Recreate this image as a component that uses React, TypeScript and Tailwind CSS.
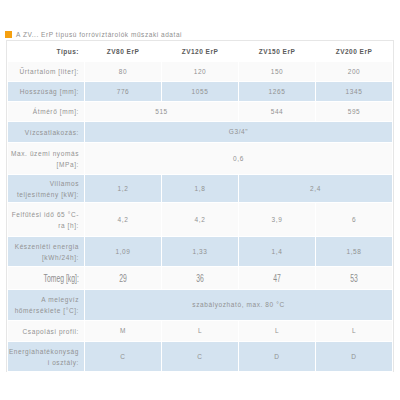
import React from "react";

type Cell = { t: string; span?: number };
type Row = { label: string[]; cells: Cell[]; h: number; blue: boolean; big?: boolean };

const rows: Row[] = [
  { label: ["Űrtartalom [liter]:"], cells: [{ t: "80" }, { t: "120" }, { t: "150" }, { t: "200" }], h: 19, blue: false },
  { label: ["Hosszúság [mm]:"], cells: [{ t: "776" }, { t: "1055" }, { t: "1265" }, { t: "1345" }], h: 19, blue: true },
  { label: ["Átmérő [mm]:"], cells: [{ t: "515", span: 2 }, { t: "544" }, { t: "595" }], h: 19, blue: false },
  { label: ["Vízcsatlakozás:"], cells: [{ t: "G3/4\"", span: 4 }], h: 20, blue: true },
  { label: ["Max. üzemi nyomás", "[MPa]:"], cells: [{ t: "0,6", span: 4 }], h: 31, blue: false },
  { label: ["Villamos", "teljesítmény [kW]:"], cells: [{ t: "1,2" }, { t: "1,8" }, { t: "2,4", span: 2 }], h: 27, blue: true },
  { label: ["Felfűtési idő 65 °C-", "ra [h]:"], cells: [{ t: "4,2" }, { t: "4,2" }, { t: "3,9" }, { t: "6" }], h: 33, blue: false },
  { label: ["Készenléti energia", "[kWh/24h]:"], cells: [{ t: "1,09" }, { t: "1,33" }, { t: "1,4" }, { t: "1,58" }], h: 29, blue: true },
  { label: ["Tomeg [kg]:"], cells: [{ t: "29" }, { t: "36" }, { t: "47" }, { t: "53" }], h: 22, blue: false, big: true },
  { label: ["A melegvíz", "hőmérséklete [°C]:"], cells: [{ t: "szabályozható, max. 80 °C", span: 4 }], h: 30, blue: true },
  { label: ["Csapolási profil:"], cells: [{ t: "M" }, { t: "L" }, { t: "L" }, { t: "L" }], h: 20, blue: false },
  { label: ["Energiahatékonyság", "i osztály:"], cells: [{ t: "C" }, { t: "C" }, { t: "D" }, { t: "D" }], h: 29, blue: true },
];

export default function App() {
  return (
    <div
      className="w-[400px] h-[400px] bg-white overflow-hidden"
      style={{ fontFamily: '"Liberation Sans", Arial, sans-serif' }}
    >
      <div className="pt-[31px] pl-[5px] flex gap-[4px] h-[40px] items-start">
        <div className="w-[7px] h-[7px] bg-[#f5a00f]" />
        <div className="text-[6.5px] tracking-[0.55px] text-[#8f8f8f] leading-[8px]">
          A ZV... ErP típusú forróvíztárolók műszaki adatai
        </div>
      </div>
      <div className="ml-[6px] w-[388px] border border-[#e6e6e6] border-b-0">
        <table className="w-full table-fixed border-separate border-spacing-[1.5px] text-[6.5px] leading-[8px]">
          <tbody>
            <tr>
              <td className="p-0 h-[19px] text-right pr-[5px] font-bold tracking-[0.5px] text-[#5a5a5a] bg-white">
                Típus:
              </td>
              {["ZV80 ErP", "ZV120 ErP", "ZV150 ErP", "ZV200 ErP"].map((t) => (
                <td key={t} className="p-0 text-center font-bold tracking-[0.5px] text-[#5a5a5a] bg-white">
                  {t}
                </td>
              ))}
            </tr>
            {rows.map((r, i) => (
              <tr key={i}>
                <td
                  className={`p-0 text-right pr-[5px] text-[#929292] ${r.blue ? "bg-[#d4e3f0]" : "bg-[#fafafa]"}`}
                  style={{ height: r.h }}
                >
                  {r.big ? (
                    <span className="inline-block text-[11px] leading-[12px] scale-x-[0.62] origin-right text-[#8e8e8e] whitespace-nowrap">
                      {r.label[0]}
                    </span>
                  ) : (
                    r.label.map((l, j) => (
                      <div key={j} className="leading-[11px] tracking-[0.6px] whitespace-nowrap">
                        {l}
                      </div>
                    ))
                  )}
                </td>
                {r.cells.map((c, j) => (
                  <td
                    key={j}
                    colSpan={c.span ?? 1}
                    className={`p-0 text-center text-[#929292] ${r.blue ? "bg-[#d4e3f0]" : "bg-[#fafafa]"}`}
                  >
                    {r.big ? (
                      <span className="inline-block text-[11px] leading-[12px] scale-x-[0.62] text-[#8e8e8e]">
                        {c.t}
                      </span>
                    ) : (
                      <span className="tracking-[0.6px]">{c.t}</span>
                    )}
                  </td>
                ))}
              </tr>
            ))}
          </tbody>
        </table>
      </div>
    </div>
  );
}
